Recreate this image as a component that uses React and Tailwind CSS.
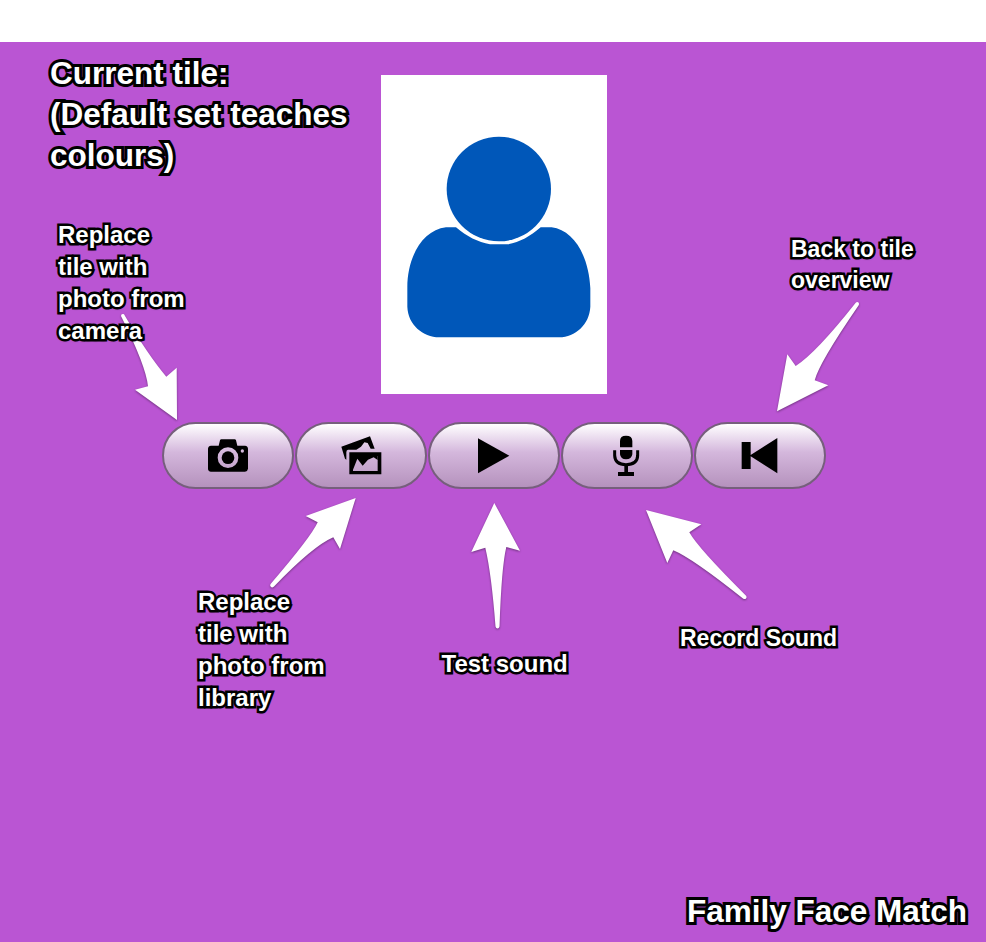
import React from 'react';

const ink = "font-['Liberation_Sans',Arial,sans-serif] font-bold text-white whitespace-pre [paint-order:stroke_fill] [-webkit-text-stroke-color:#000] [stroke-linejoin:round] [text-shadow:0_2px_2px_rgba(0,0,0,0.5)]";
const large = ink + ' text-[31.5px] leading-[41px] [-webkit-text-stroke-width:6px]';
const medium = ink + ' text-[24px] leading-[32px] [-webkit-text-stroke-width:5px]';
const small = ink + ' text-[23px] leading-[31px] [-webkit-text-stroke-width:5px]';

function PillButton({ label, children }) {
  return (
    <button
      aria-label={label}
      className="flex h-[67px] w-[132px] items-center justify-center rounded-full border-2 border-[#765f7c] bg-linear-to-b from-white via-[#d4b7dc] via-45% to-[#b592bd]"
    >
      <svg viewBox="0 0 396 198" className="h-[66px] w-[132px] shrink-0">
        {children}
      </svg>
    </button>
  );
}

function Person() {
  return (
    <svg viewBox="33 45 678 957" className="h-[319px] w-[226px]" fill="#0057b9">
      <ellipse cx="386.500" cy="387" rx="156.500" ry="157" />
      <path d="M258 502H228C158 510 112 590 112 682V740C114 795 158 830 208 832H568C616 830 658 795 661 740V685C656 585 610 510 545 502H512C480 529 450 547 414 553H360C324 547 290 529 258 502Z" />
    </svg>
  );
}

function Arrows() {
  return (
    <svg
      viewBox="0 42 986 900"
      className="pointer-events-none absolute inset-0 h-[900px] w-[986px] [filter:drop-shadow(0_1px_1px_rgba(0,0,0,0.4))]"
      fill="#fff"
    >
      <path d="M121 316Q121 313.500 123.500 314Q124.500 314.500 125 316Q148 355 166.300 376.700L176.700 367.700L177 420L135 389.700L148 386.300Q146 366 121 316Z" />
      <path d="M855.500 303Q857 301.500 858.500 302.500Q859.500 304 858.500 305.500Q819 363 814.700 380.300L828.300 385.300L777 411.300L787.300 354.300L795.700 366Q816 353 855.500 303Z" />
      <path d="M270.300 586Q269.800 584.800 271 583.500Q311 537 317.700 522.300L305.700 516L355.700 498L340 549L333.300 537.300Q313 546 274 586.500Q271.500 588.500 270.300 586Z" />
      <path d="M495.500 626.500Q491.500 574 485.300 547.700L471.300 552L494.300 503L520 550.700L506.300 547Q501.500 567 499.500 626.500Q499 628.500 497.500 628.500Q496 628.500 495.500 626.500Z" />
      <path d="M746.300 596Q747 597.500 746 598.600Q744.800 599.600 743 598.600Q692 558 673.300 550.300L667.300 563L646 510L701.300 524.300L689.300 532.300Q698 548 746.300 596Z" />
    </svg>
  );
}

export default function App() {
  return (
    <div className="h-[942px] w-[986px] overflow-hidden bg-white pt-[42px]">
      <main className="relative flex h-[900px] flex-col bg-[#ba55d3]">
        <div className="flex">
          <h1 className={'w-[381px] shrink-0 pt-[11px] pl-[50px] ' + large}>
            {'Current tile:\n(Default set teaches\ncolours)'}
          </h1>
          <div className="mt-[33px] h-[319px] w-[226px] bg-white">
            <Person />
          </div>
        </div>

        <div className="mt-[28px] ml-[162px] flex gap-px">
          <PillButton label="Camera">
            <path fillRule="evenodd" d="M170 68L174 52Q175 49 178 49H218Q221 49 222 52L226 68H249Q258 69 258 78V137Q257 145 249 146H147Q138 145 138 137V78Q138 69 147 68ZM198 73A31 31 0 1 0 198 135A31 31 0 1 0 198 73ZM241 79A5 5 0 1 0 241 89A5 5 0 1 0 241 79Z" />
            <circle cx="198" cy="104" r="19" />
          </PillButton>
          <PillButton label="Photo library">
            <path d="M139 71L225 40L239 77H227L218 60L208 58L198 71L184 80H159Q154 81 154 88V110L150 107Z" />
            <path fillRule="evenodd" d="M163 88H259V154H163ZM174 99V144H248V99Z" />
            <path d="M174 99H248V111L236 103L219 110L203 128L187 107L174 140Z" />
          </PillButton>
          <PillButton label="Play">
            <path d="M150 46L244 98L150 151Z" />
          </PillButton>
          <PillButton label="Record">
            <path d="M177 73V54Q177 38 195 38Q214 38 214 54V73ZM177 81H214V94Q212 109 195 109Q179 109 177 94Z" />
            <path d="M161 82V98Q162 125 195 125Q229 125 230 98V82" fill="none" stroke="#000" strokeWidth="9" />
            <path d="M190 125H201V147H219V159H171V147H190Z" />
          </PillButton>
          <PillButton label="Back">
            <path d="M143 57H170V96L250 45V151L170 100V138H143Z" />
          </PillButton>
        </div>

        <Arrows />

        <p className={'absolute top-[177px] left-[58px] ' + medium}>{'Replace\ntile with\nphoto from\ncamera'}</p>
        <p className={'absolute top-[544px] left-[198px] ' + medium}>{'Replace\ntile with\nphoto from\nlibrary'}</p>
        <p className={'absolute top-[606px] left-[441.500px] ' + medium}>Test sound</p>
        <p className={'absolute top-[581px] left-[680px] ' + small}>Record Sound</p>
        <p className={'absolute top-[192px] left-[791px] ' + small}>{'Back to tile\noverview'}</p>

        <footer className={'mt-auto mb-[10px] ml-[687px] ' + large}>Family Face Match</footer>
      </main>
    </div>
  );
}
